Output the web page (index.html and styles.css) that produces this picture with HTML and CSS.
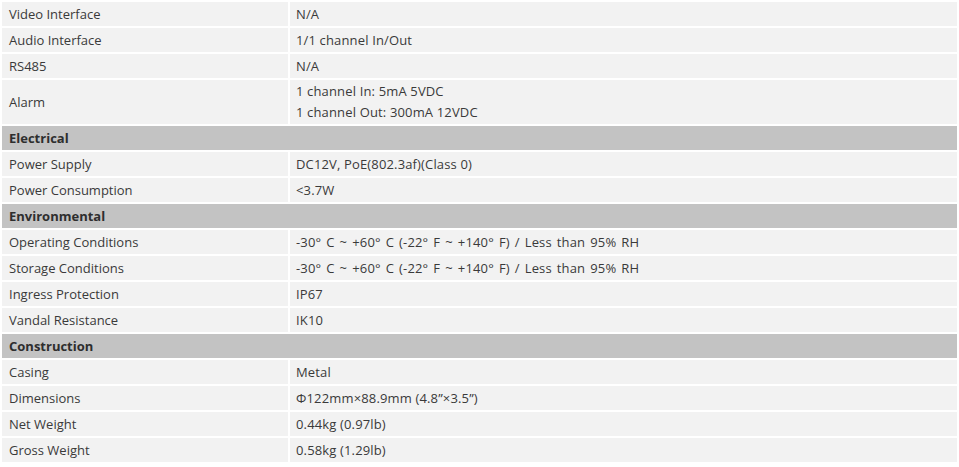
FILE: index.html
```html
<!DOCTYPE html>
<html>
<head>
<meta charset="utf-8">
<link rel="stylesheet" href="styles.css">
</head>
<body>
<table class="spec">
<tr><td class="k">Video Interface</td><td>N/A</td></tr>
<tr><td class="k">Audio Interface</td><td>1/1 channel In/Out</td></tr>
<tr><td class="k">RS485</td><td>N/A</td></tr>
<tr class="multi"><td class="k">Alarm</td><td>1 channel In: 5mA 5VDC<br>1 channel Out: 300mA 12VDC</td></tr>
<tr class="head"><td colspan="2">Electrical</td></tr>
<tr><td class="k">Power Supply</td><td>DC12V, PoE(802.3af)(Class 0)</td></tr>
<tr><td class="k">Power Consumption</td><td>&lt;3.7W</td></tr>
<tr class="head"><td colspan="2">Environmental</td></tr>
<tr><td class="k">Operating Conditions</td><td class="wide">-30° C ~ +60° C (-22° F ~ +140° F) / Less than 95% RH</td></tr>
<tr><td class="k">Storage Conditions</td><td class="wide">-30° C ~ +60° C (-22° F ~ +140° F) / Less than 95% RH</td></tr>
<tr><td class="k">Ingress Protection</td><td>IP67</td></tr>
<tr><td class="k">Vandal Resistance</td><td>IK10</td></tr>
<tr class="head"><td colspan="2">Construction</td></tr>
<tr><td class="k">Casing</td><td>Metal</td></tr>
<tr><td class="k">Dimensions</td><td>Φ122mm×88.9mm (4.8”×3.5”)</td></tr>
<tr><td class="k">Net Weight</td><td>0.44kg (0.97lb)</td></tr>
<tr><td class="k">Gross Weight</td><td>0.58kg (1.29lb)</td></tr>
</table>
</body>
</html>
```
FILE: styles.css
```css
html, body {
  margin: 0;
  padding: 0;
  background: #fff;
}
.spec {
  width: 100%;
  border-collapse: separate;
  border-spacing: 2px;
  font-family: "Open Sans", "Liberation Sans", sans-serif;
  font-size: 13px;
  color: #3a3a3a;
}
.spec td {
  background: #f2f2f2;
  height: 24px;
  padding: 0 6px;
  line-height: 20px;
  vertical-align: middle;
  box-sizing: border-box;
  letter-spacing: 0.15px;
}
.spec td.k {
  width: 286px;
  padding-left: 7px;
  letter-spacing: 0;
}
.spec td.wide {
  word-spacing: 1.5px;
}
.spec tr.multi td {
  padding-top: 1px;
  padding-bottom: 1px;
  line-height: 21px;
}
.spec tr.head td {
  background: #c3c3c3;
  font-weight: bold;
  color: #2e2e2e;
  padding-left: 7px;
  letter-spacing: 0;
}
```
